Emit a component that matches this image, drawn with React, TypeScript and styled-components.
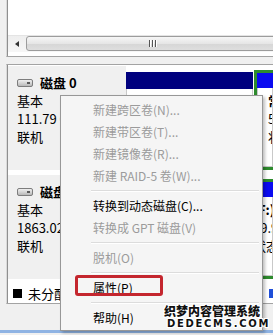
import React from "react";
import styled, { createGlobalStyle } from "styled-components";

const Global = createGlobalStyle`
  html, body { margin: 0; padding: 0; }
  body { background: #f0f0f0; overflow: hidden; }
`;

const Screen = styled.div`
  position: relative;
  width: 273px;
  height: 335px;
  overflow: hidden;
  display: flex;
  flex-direction: column;
  background: #f0f0f0;
  font-family: "Noto Sans CJK SC", "Noto Sans", sans-serif;
  font-size: 13px;
  color: #000;
`;

const UpperPane = styled.div`
  margin-left: 6px;
  padding-left: 1px;
  border-left: 1px solid #dadada;
  box-shadow: inset 1px 0 0 #8f8f8f;
  border-bottom: 1px solid #a3a3a3;
  background: #fff;
  height: 57px;
  box-sizing: border-box;
  display: flex;
  flex-direction: column;
  justify-content: flex-end;
  padding-bottom: 4px;
`;

const Scrollbar = styled.div`
  height: 17px;
  display: flex;
  align-items: stretch;
  border-top: 1px solid #e4e4e4;
  background: linear-gradient(#eeeeee, #f6f6f6);
  box-sizing: border-box;
  overflow: hidden;
`;

const ArrowButton = styled.div`
  width: 18px;
  flex-shrink: 0;
  display: flex;
  align-items: center;
  justify-content: center;
  &::before {
    content: "";
    border-style: solid;
    border-width: 3px 4px 3px 0;
    border-color: transparent #333 transparent transparent;
  }
`;

const Thumb = styled.div`
  width: 252px;
  flex-shrink: 0;
  margin: 0 0 1px 0;
  border: 1px solid #9c9c9c;
  border-radius: 3px;
  background: linear-gradient(#f6f6f6, #e6e6e6 50%, #d6d6d6 51%, #dedede);
  box-sizing: border-box;
  display: flex;
  align-items: center;
  justify-content: center;
  gap: 2px;
`;

const Grip = styled.span`
  width: 1px;
  height: 7px;
  background: #555;
  box-shadow: 1px 0 0 #fff;
`;

const Splitter = styled.div`
  height: 7px;
  background: #f0f0f0;
`;

const LowerPane = styled.div`
  margin-left: 6px;
  padding-left: 1px;
  border-left: 1px solid #dadada;
  box-shadow: inset 1px 0 0 #8f8f8f;
  border-top: 1px solid #a3a3a3;
  border-bottom: 1px solid #a3a3a3;
  background: #fff;
  height: 240px;
  box-sizing: border-box;
  padding-top: 1px;
  display: flex;
  flex-direction: column;
`;

const DiskRow = styled.div`
  height: 104px;
  display: flex;
  flex-shrink: 0;
  & + & {
    margin-top: 5px;
  }
`;

const DiskLabel = styled.div`
  width: 118px;
  flex-shrink: 0;
  background: #f0f0f0;
  box-sizing: border-box;
  padding: 8px 0 0 9px;
  line-height: 18px;
  white-space: nowrap;
  overflow: hidden;
`;

const DiskTitle = styled.div`
  display: flex;
  align-items: center;
  gap: 7px;
  font-weight: 700;
`;

const Partitions = styled.div`
  flex: 1;
  display: flex;
  gap: 1px;
  padding-top: 4px;
  min-width: 0;
`;

const Primary = styled.div<{ $w: number }>`
  width: ${(p) => p.$w}px;
  flex-shrink: 0;
  display: flex;
  flex-direction: column;
  padding-top: 2px;
`;

const Stripe = styled.div<{ $color: string; $h: number }>`
  height: ${(p) => p.$h}px;
  background: ${(p) => p.$color};
  flex-shrink: 0;
`;

const PartBody = styled.div`
  flex: 1;
  background: #fff;
  border: 1px solid #c9c9c9;
  border-top: none;
  padding: 4px 0 0 10px;
  line-height: 18px;
  white-space: nowrap;
  overflow: hidden;
`;

const Extended = styled.div`
  flex: 1;
  min-width: 0;
  border: 3px solid #2e8b2e;
  border-right: none;
  display: flex;
  flex-direction: column;
`;

const Bold = styled.div`
  font-weight: 700;
`;

const Legend = styled.div`
  margin-top: 5px;
  height: 19px;
  display: flex;
  align-items: center;
  gap: 27px;
  padding-left: 5px;
  white-space: nowrap;
`;

const LegendItem = styled.div`
  display: flex;
  align-items: center;
  gap: 6px;
  flex-shrink: 0;
`;

const Swatch = styled.span<{ $color: string }>`
  width: 9px;
  height: 9px;
  background: ${(p) => p.$color};
  display: inline-block;
`;

const FrameGap = styled.div`
  flex: 1;
  background: #f0f0f0;
`;

const BlueEdge = styled.div`
  height: 3px;
  background: #8fb3e3;
  margin-bottom: 2px;
`;

const Menu = styled.div`
  position: absolute;
  left: 60px;
  top: 95px;
  width: 203px;
  box-sizing: border-box;
  border: 1px solid #979797;
  background: #f5f5f5;
  padding: 3px 0 1px;
  box-shadow: 2px 2px 3px rgba(0, 0, 0, 0.25);
  font-size: 12px;
`;

const MenuItem = styled.div<{ $disabled?: boolean }>`
  position: relative;
  height: 22px;
  line-height: 22px;
  padding-left: 32px;
  white-space: nowrap;
  color: ${(p) => (p.$disabled ? "#9b9b9b" : "#000")};
`;

const MenuSep = styled.div`
  height: 8px;
  display: flex;
  align-items: center;
  padding: 0 3px 0 30px;
  &::before {
    content: "";
    flex: 1;
    height: 1px;
    background: #dcdcdc;
    border-bottom: 1px solid #ffffff;
  }
`;

const RedMark = styled.span`
  position: absolute;
  left: 14px;
  top: -2px;
  width: 88px;
  height: 21px;
  box-sizing: border-box;
  border: 3px solid #c4262e;
  border-radius: 3px;
`;

const Watermark = styled.div`
  position: absolute;
  left: 164px;
  top: 304px;
  color: #111;
  font-weight: 900;
  text-shadow: 1px 0 0 #fff, -1px 0 0 #fff, 0 1px 0 #fff, 0 -1px 0 #fff,
    1px 1px 0 #fff, -1px -1px 0 #fff, 1px -1px 0 #fff, -1px 1px 0 #fff;
`;

const WatermarkCn = styled.div`
  font-family: "Noto Sans CJK SC", sans-serif;
  font-size: 12px;
  line-height: 14px;
`;

const WatermarkEn = styled.div`
  font-family: "DejaVu Sans", sans-serif;
  font-size: 10px;
  line-height: 12px;
  letter-spacing: 1.7px;
  padding-left: 3px;
`;

const DiskIcon = () => (
  <svg width="16" height="8" viewBox="0 0 16 8">
    <defs>
      <linearGradient id="hd" x1="0" y1="0" x2="0" y2="1">
        <stop offset="0" stopColor="#f4f4f4" />
        <stop offset="1" stopColor="#b4b4b4" />
      </linearGradient>
    </defs>
    <rect x="0.5" y="0.5" width="15" height="7" rx="1.5" fill="url(#hd)" stroke="#7d7d7d" />
    <rect x="10" y="3" width="3" height="2" fill="#5a5a5a" />
  </svg>
);

const menu: Array<{ t: string; d?: boolean } | "sep"> = [
  { t: "新建跨区卷(N)...", d: true },
  { t: "新建带区卷(T)...", d: true },
  { t: "新建镜像卷(R)...", d: true },
  { t: "新建 RAID-5 卷(W)...", d: true },
  "sep",
  { t: "转换到动态磁盘(C)..." },
  { t: "转换成 GPT 磁盘(V)", d: true },
  "sep",
  { t: "脱机(O)", d: true },
  "sep",
  { t: "属性(P)" },
  "sep",
  { t: "帮助(H)" },
];

export default function App() {
  return (
    <Screen>
      <Global />
      <UpperPane>
        <Scrollbar>
          <ArrowButton />
          <Thumb>
            <Grip />
            <Grip />
            <Grip />
          </Thumb>
        </Scrollbar>
      </UpperPane>
      <Splitter />
      <LowerPane>
        <DiskRow>
          <DiskLabel>
            <DiskTitle>
              <DiskIcon />
              <span>磁盘 0</span>
            </DiskTitle>
            <div>基本</div>
            <div>111.79 GB</div>
            <div>联机</div>
          </DiskLabel>
          <Partitions>
            <Primary $w={127}>
              <Stripe $color="#00007e" $h={17} />
              <PartBody />
            </Primary>
            <Extended>
              <Stripe $color="#0a0af0" $h={15} />
              <PartBody>
                <Bold>常用 (D:)</Bold>
                <div>55.49 GB NTFS</div>
                <div>状态良好 (逻辑驱动器)</div>
              </PartBody>
            </Extended>
          </Partitions>
        </DiskRow>
        <DiskRow>
          <DiskLabel>
            <DiskTitle>
              <DiskIcon />
              <span>磁盘 1</span>
            </DiskTitle>
            <div>基本</div>
            <div>1863.02 GB</div>
            <div>联机</div>
          </DiskLabel>
          <Partitions>
            <Primary $w={112}>
              <Stripe $color="#00007e" $h={17} />
              <PartBody />
            </Primary>
            <Extended>
              <Stripe $color="#0a0af0" $h={15} />
              <PartBody>
                <Bold>(F:)</Bold>
                <div>29.97 GB NTFS</div>
                <div>状态良好 (逻辑驱动器)</div>
              </PartBody>
            </Extended>
          </Partitions>
        </DiskRow>
        <Legend>
          <LegendItem>
            <Swatch $color="#000" />
            未分配
          </LegendItem>
          <LegendItem>
            <Swatch $color="#00007e" />
            主分区
          </LegendItem>
          <LegendItem>
            <Swatch $color="#2e8b2e" />
            扩展分区
          </LegendItem>
          <LegendItem>
            <Swatch $color="#1f4fd8" />
            逻辑驱动器
          </LegendItem>
        </Legend>
      </LowerPane>
      <FrameGap />
      <BlueEdge />
      <Menu>
        {menu.map((m, i) =>
          m === "sep" ? (
            <MenuSep key={i} />
          ) : (
            <MenuItem key={i} $disabled={m.d}>
              {m.t === "属性(P)" && <RedMark />}
              {m.t}
            </MenuItem>
          )
        )}
      </Menu>
      <Watermark>
        <WatermarkCn>织梦内容管理系统</WatermarkCn>
        <WatermarkEn>DEDECMS.COM</WatermarkEn>
      </Watermark>
    </Screen>
  );
}
